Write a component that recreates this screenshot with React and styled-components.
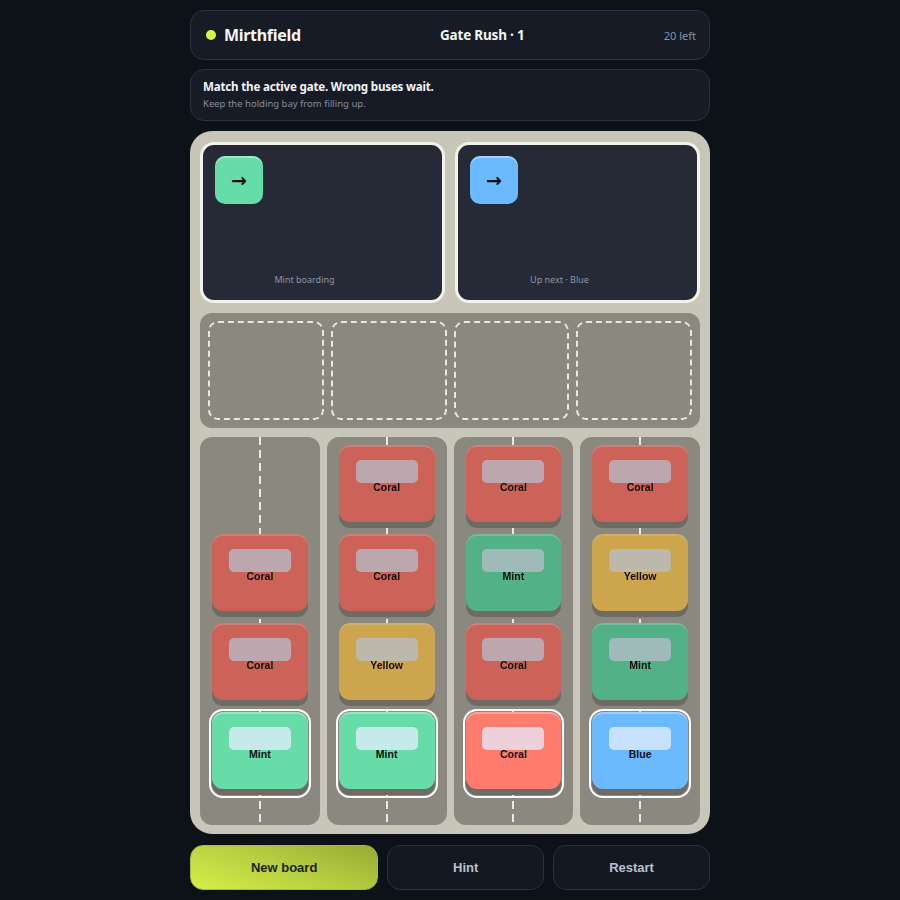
import React from "react";
import styled, { createGlobalStyle, css } from "styled-components";

const Global = createGlobalStyle`
  html, body { margin: 0; padding: 0; background: #0d1118; }
  body { font-family: "Noto Sans", "DejaVu Sans", sans-serif; color: #e8ecf2; }
  * { box-sizing: border-box; }
`;

const Page = styled.div`
  width: 900px;
  height: 900px;
  display: flex;
  justify-content: center;
  padding-top: 10px;
  background: #0d1118;
`;

const Column = styled.div`
  width: 520px;
  display: flex;
  flex-direction: column;
`;

const Header = styled.header`
  height: 50px;
  border: 1px solid #2b3242;
  background: #161b26;
  border-radius: 14px;
  display: flex;
  justify-content: space-between;
  align-items: center;
  padding: 0 13px 0 15px;
`;

const Brand = styled.div`
  display: flex;
  align-items: center;
  gap: 8px;
  font-weight: 700;
  font-size: 16px;
  letter-spacing: -0.3px;
  color: #f4f6f8;
`;

const Dot = styled.span`
  width: 10px;
  height: 10px;
  border-radius: 50%;
  background: #d7f542;
`;

const Title = styled.div`
  font-weight: 700;
  font-size: 13.5px;
  color: #f4f6f8;
  letter-spacing: -0.2px;
`;

const Count = styled.div`
  font-size: 11px;
  color: #8a93a3;
`;

const Info = styled.div`
  margin-top: 9px;
  height: 52px;
  border: 1px solid #2b3242;
  background: #161b26;
  border-radius: 14px;
  padding: 9px 12px;
  display: flex;
  flex-direction: column;
  gap: 3px;
`;

const InfoTitle = styled.div`
  font-weight: 700;
  font-size: 11.6px;
  color: #f1f3f6;
  letter-spacing: -0.2px;
`;

const InfoSub = styled.div`
  font-size: 9.5px;
  color: #858d9b;
`;

const Board = styled.div`
  margin-top: 10px;
  height: 703px;
  background: #c8c5b9;
  border-radius: 22px;
  padding: 11px 10px 9px;
  display: flex;
  flex-direction: column;
  gap: 9px;
`;

const Gates = styled.div`
  display: grid;
  grid-template-columns: 1fr 1fr;
  gap: 10px;
  height: 162px;
  margin-bottom: 1px;
`;

const Gate = styled.div`
  border: 3px solid #f3f1eb;
  border-radius: 14px;
  background: #252a36;
  padding: 11px 12px 14px;
  display: flex;
  flex-direction: column;
  justify-content: space-between;
`;

const GateIcon = styled.div`
  width: 48px;
  height: 48px;
  border-radius: 10px;
  background: ${(p) => p.$color};
  box-shadow: inset 0 2px 0 rgba(255, 255, 255, 0.35);
  display: flex;
  align-items: center;
  justify-content: center;
  color: #111;
  font-size: 19px;
  font-family: "DejaVu Sans", sans-serif;
  font-weight: 700;
`;

const GateLabel = styled.div`
  text-align: center;
  padding-right: 36px;
  font-size: 9px;
  color: #8d95a3;
`;

const Bay = styled.div`
  height: 115px;
  background: #8b8880;
  border-radius: 12px;
  padding: 8px;
  display: grid;
  grid-template-columns: repeat(4, 1fr);
  gap: 7px;
`;

const Slot = styled.div`
  border: 2px dashed #e9e7e1;
  border-radius: 10px;
`;

const Lanes = styled.div`
  flex: 1;
  display: grid;
  grid-template-columns: repeat(4, 1fr);
  gap: 7px;
`;

const Lane = styled.div`
  position: relative;
  background: #8b8880;
  border-radius: 12px;
  padding: 8px 12px 30px;
  display: flex;
  flex-direction: column;
  justify-content: flex-end;
  gap: 6px;
  &::before {
    content: "";
    position: absolute;
    top: 0;
    bottom: 0;
    left: 50%;
    width: 2px;
    margin-left: -1px;
    background: repeating-linear-gradient(
      to bottom,
      rgba(245, 244, 240, 0.9) 0 8px,
      transparent 8px 13px
    );
  }
`;

const BUS = {
  Coral: "#ff7b6e",
  Mint: "#66dda8",
  Yellow: "#ffce60",
  Blue: "#6bbaff",
};

const Bus = styled.div`
  position: relative;
  z-index: 1;
  height: 83px;
  padding-bottom: 6px;
  border-radius: 11px;
  background: #6e6b65;
  ${(p) =>
    p.$front &&
    css`
      outline: 2px solid #ffffff;
      outline-offset: 1px;
    `}
`;

const Body = styled.div`
  position: relative;
  height: 100%;
  border-radius: 11px;
  background: ${(p) => p.$color};
  box-shadow: inset 0 2px 0 rgba(255, 255, 255, 0.3);
  display: flex;
  align-items: center;
  justify-content: center;
  filter: ${(p) => (p.$front ? "none" : "brightness(0.8)")};
`;

const Window = styled.div`
  position: absolute;
  top: 15px;
  left: 50%;
  width: 62px;
  height: 23px;
  margin-left: -31px;
  border-radius: 5px;
  background: rgba(230, 238, 255, 0.75);
`;

const BusLabel = styled.span`
  position: relative;
  margin-top: 6px;
  font-family: "Liberation Sans", Arial, sans-serif;
  font-weight: 700;
  font-size: 10.5px;
  color: #111;
`;

const Actions = styled.div`
  margin-top: 11px;
  display: grid;
  grid-template-columns: 1.2fr 1fr 1fr;
  gap: 9px;
  height: 45px;
`;

const Button = styled.button`
  border-radius: 13px;
  font-family: "Liberation Sans", Arial, sans-serif;
  font-weight: 700;
  font-size: 13px;
  cursor: pointer;
  ${(p) =>
    p.$primary
      ? css`
          border: 1px solid #a9bb3a;
          background: linear-gradient(20deg, #d4ef48 0%, #b7cf40 50%, #98aa34 100%);
          color: #1b1f10;
        `
      : css`
          border: 1px solid #2a3140;
          background: #131822;
          color: #b9c1cd;
        `}
`;

const lanes = [
  ["Coral", "Coral", "Mint"],
  ["Coral", "Coral", "Yellow", "Mint"],
  ["Coral", "Mint", "Coral", "Coral"],
  ["Coral", "Yellow", "Mint", "Blue"],
];

export default function App() {
  return (
    <>
      <Global />
      <Page>
        <Column>
          <Header>
            <Brand>
              <Dot />
              Mirthfield
            </Brand>
            <Title>Gate Rush · 1</Title>
            <Count>20 left</Count>
          </Header>
          <Info>
            <InfoTitle>Match the active gate. Wrong buses wait.</InfoTitle>
            <InfoSub>Keep the holding bay from filling up.</InfoSub>
          </Info>
          <Board>
            <Gates>
              <Gate>
                <GateIcon $color="#66dda8">→</GateIcon>
                <GateLabel>Mint boarding</GateLabel>
              </Gate>
              <Gate>
                <GateIcon $color="#6bbaff">→</GateIcon>
                <GateLabel>Up next · Blue</GateLabel>
              </Gate>
            </Gates>
            <Bay>
              <Slot />
              <Slot />
              <Slot />
              <Slot />
            </Bay>
            <Lanes>
              {lanes.map((lane, i) => (
                <Lane key={i}>
                  {lane.map((c, j) => {
                    const front = j === lane.length - 1;
                    return (
                      <Bus key={j} $front={front}>
                        <Body $color={BUS[c]} $front={front}>
                          <Window />
                          <BusLabel>{c}</BusLabel>
                        </Body>
                      </Bus>
                    );
                  })}
                </Lane>
              ))}
            </Lanes>
          </Board>
          <Actions>
            <Button $primary>New board</Button>
            <Button>Hint</Button>
            <Button>Restart</Button>
          </Actions>
        </Column>
      </Page>
    </>
  );
}
